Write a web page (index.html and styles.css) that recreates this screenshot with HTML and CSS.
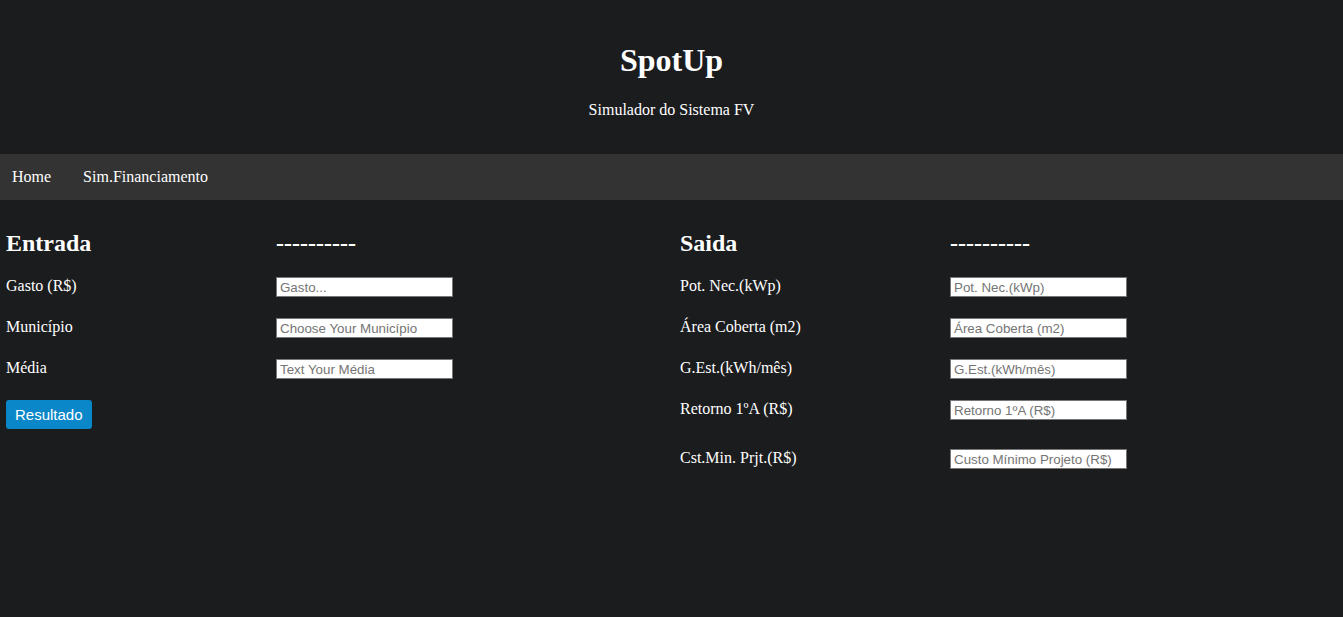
FILE: index.html
```html
<!DOCTYPE html>
<html lang="pt">
<head>
<meta charset="utf-8">
<title>SpotUp</title>
<link rel="stylesheet" href="styles.css">
</head>
<body>
<header class="hero">
  <h1 class="title">SpotUp</h1>
  <p class="subtitle">Simulador do Sistema FV</p>
</header>
<nav class="nav">
  <a class="nav-link" href="#">Home</a>
  <a class="nav-link" href="#">Sim.Financiamento</a>
</nav>
<main class="content">
  <section class="panel">
    <h2 class="head">Entrada</h2>
    <h2 class="head">----------</h2>
    <label class="lbl">Gasto (R$)</label>
    <input class="field" type="text" placeholder="Gasto...">
    <label class="lbl">Município</label>
    <input class="field" type="text" placeholder="Choose Your Município">
    <label class="lbl">Média</label>
    <input class="field" type="text" placeholder="Text Your Média">
    <button class="btn">Resultado</button>
  </section>
  <section class="panel">
    <h2 class="head">Saida</h2>
    <h2 class="head">----------</h2>
    <label class="lbl">Pot. Nec.(kWp)</label>
    <input class="field" type="text" placeholder="Pot. Nec.(kWp)">
    <label class="lbl">Área Coberta (m2)</label>
    <input class="field" type="text" placeholder="Área Coberta (m2)">
    <label class="lbl">G.Est.(kWh/mês)</label>
    <input class="field" type="text" placeholder="G.Est.(kWh/mês)">
    <label class="lbl">Retorno 1ºA (R$)</label>
    <input class="field" type="text" placeholder="Retorno 1ºA (R$)">
    <label class="lbl row-last">Cst.Min. Prjt.(R$)</label>
    <input class="field row-last" type="text" placeholder="Custo Mínimo Projeto (R$)">
  </section>
</main>
</body>
</html>
```

FILE: styles.css
```css
html, body {
  margin: 0;
  padding: 0;
  background: #1b1c1e;
  color: #ffffff;
  font-family: "Liberation Serif", "Times New Roman", serif;
}

.hero {
  text-align: center;
  padding: 42px 0 35px;
}

.title {
  margin: 0;
  font-size: 32px;
  line-height: 37px;
  font-weight: bold;
}

.subtitle {
  margin: 22px 0 0;
  font-size: 16px;
  line-height: 18px;
}

.nav {
  display: flex;
  align-items: center;
  background: #333333;
  height: 46px;
}

.nav-link {
  color: #ffffff;
  text-decoration: none;
  font-size: 16px;
  padding: 0 16px 0 12px;
  line-height: 46px;
}

.nav-link + .nav-link {
  padding-left: 16px;
}

.content {
  display: grid;
  grid-template-columns: 674px 1fr;
  padding: 30px 0 0 6px;
}

.panel {
  display: grid;
  grid-template-columns: 270px 177px;
  align-content: start;
  row-gap: 21px;
}

.head {
  margin: 0;
  font-size: 24px;
  line-height: 26px;
  font-weight: bold;
}

.lbl {
  font-size: 16px;
  line-height: 18px;
  height: 20px;
}

.field {
  box-sizing: border-box;
  width: 177px;
  height: 20px;
  margin: 0;
  padding: 1px 3px;
  border: 1px solid #767676;
  background: #ffffff;
  font-family: "Liberation Sans", Arial, sans-serif;
  font-size: 13.33px;
  color: #000;
}

.field::placeholder {
  color: #757575;
}

.row-last {
  margin-top: 8px;
}

.btn {
  grid-column: 1 / 2;
  justify-self: start;
  height: 29px;
  padding: 0 9px;
  border: none;
  border-radius: 3px;
  background: #0a87c9;
  color: #ffffff;
  font-family: "Liberation Sans", Arial, sans-serif;
  font-size: 15px;
}
```
